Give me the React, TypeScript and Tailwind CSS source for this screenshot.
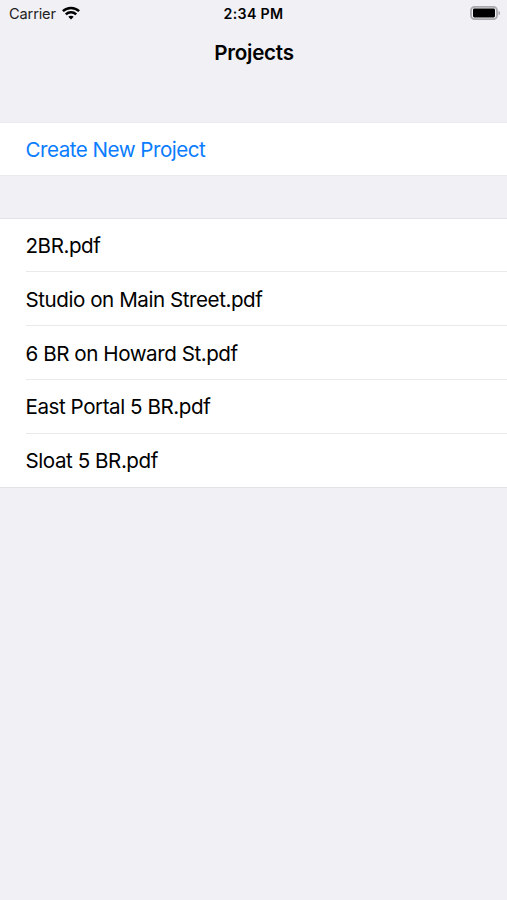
const projects = [
  "2BR.pdf",
  "Studio on Main Street.pdf",
  "6 BR on Howard St.pdf",
  "East Portal 5 BR.pdf",
  "Sloat 5 BR.pdf",
];

function WifiIcon() {
  return (
    <svg width="18" height="14" viewBox="0 0 18 14" fill="none" stroke="#000" strokeWidth="2.5">
      <path d="M0.9 5.2C5.4 0.9 12.6 0.9 17.1 5.2" />
      <path d="M3.8 8.4C6.7 5.6 11.3 5.6 14.2 8.4" />
      <path d="M6.3 10.8C7.8 9.3 10.2 9.3 11.7 10.8L9 13.6Z" fill="#000" stroke="none" />
    </svg>
  );
}

function BatteryIcon() {
  return (
    <svg width="31" height="14" viewBox="0 0 31 14">
      <rect x="1" y="0.9" width="26" height="12.2" rx="3.6" fill="none" stroke="#a9a9ad" strokeWidth="1.8" />
      <rect x="3" y="2.6" width="22" height="8.8" rx="1.4" fill="#000" />
      <path d="M28.5 4.7C30.6 5.5 30.6 8.5 28.5 9.3Z" fill="#a9a9ad" />
    </svg>
  );
}

function StatusBar() {
  return (
    <div className="grid h-7 grid-cols-3 items-center pl-[9px] pr-[6px]">
      <div className="flex items-center gap-[6px]">
        <span className="pt-px text-[14.6px] tracking-[-0.15px] text-[#222]">Carrier</span>
        <div className="pb-[2px]">
          <WifiIcon />
        </div>
      </div>
      <span className="pr-[3px] text-center text-[14.2px] font-semibold tracking-[0.35px]">2:34 PM</span>
      <div className="flex justify-end pb-[2px]">
        <BatteryIcon />
      </div>
    </div>
  );
}

export default function App() {
  return (
    <div className="h-[900px] bg-[#f1f0f5] font-['Inter',sans-serif] text-black">
      <StatusBar />
      <h1 className="flex h-[50px] items-center justify-center pl-px text-[20.6px] font-semibold tracking-[-0.25px]">
        Projects
      </h1>

      <button className="mt-[44px] flex h-[54px] w-full items-center border-y border-[#e9e9ed] bg-white pt-[2px] pl-[25.5px] text-[20.6px] tracking-[-0.5px] text-[#0a7cff]">
        Create New Project
      </button>

      <ul className="mt-[42px] border-y border-[#e3e3e7] bg-white pl-[25.5px] text-[20.6px] tracking-[-0.45px]">
        {projects.map((name) => (
          <li
            key={name}
            className="flex h-[53.8px] items-center border-b border-[#e9e9eb] pt-[3px] first:h-[53.4px] first:pt-[2px] last:h-[53.2px] last:border-b-0"
          >
            {name}
          </li>
        ))}
      </ul>
    </div>
  );
}
